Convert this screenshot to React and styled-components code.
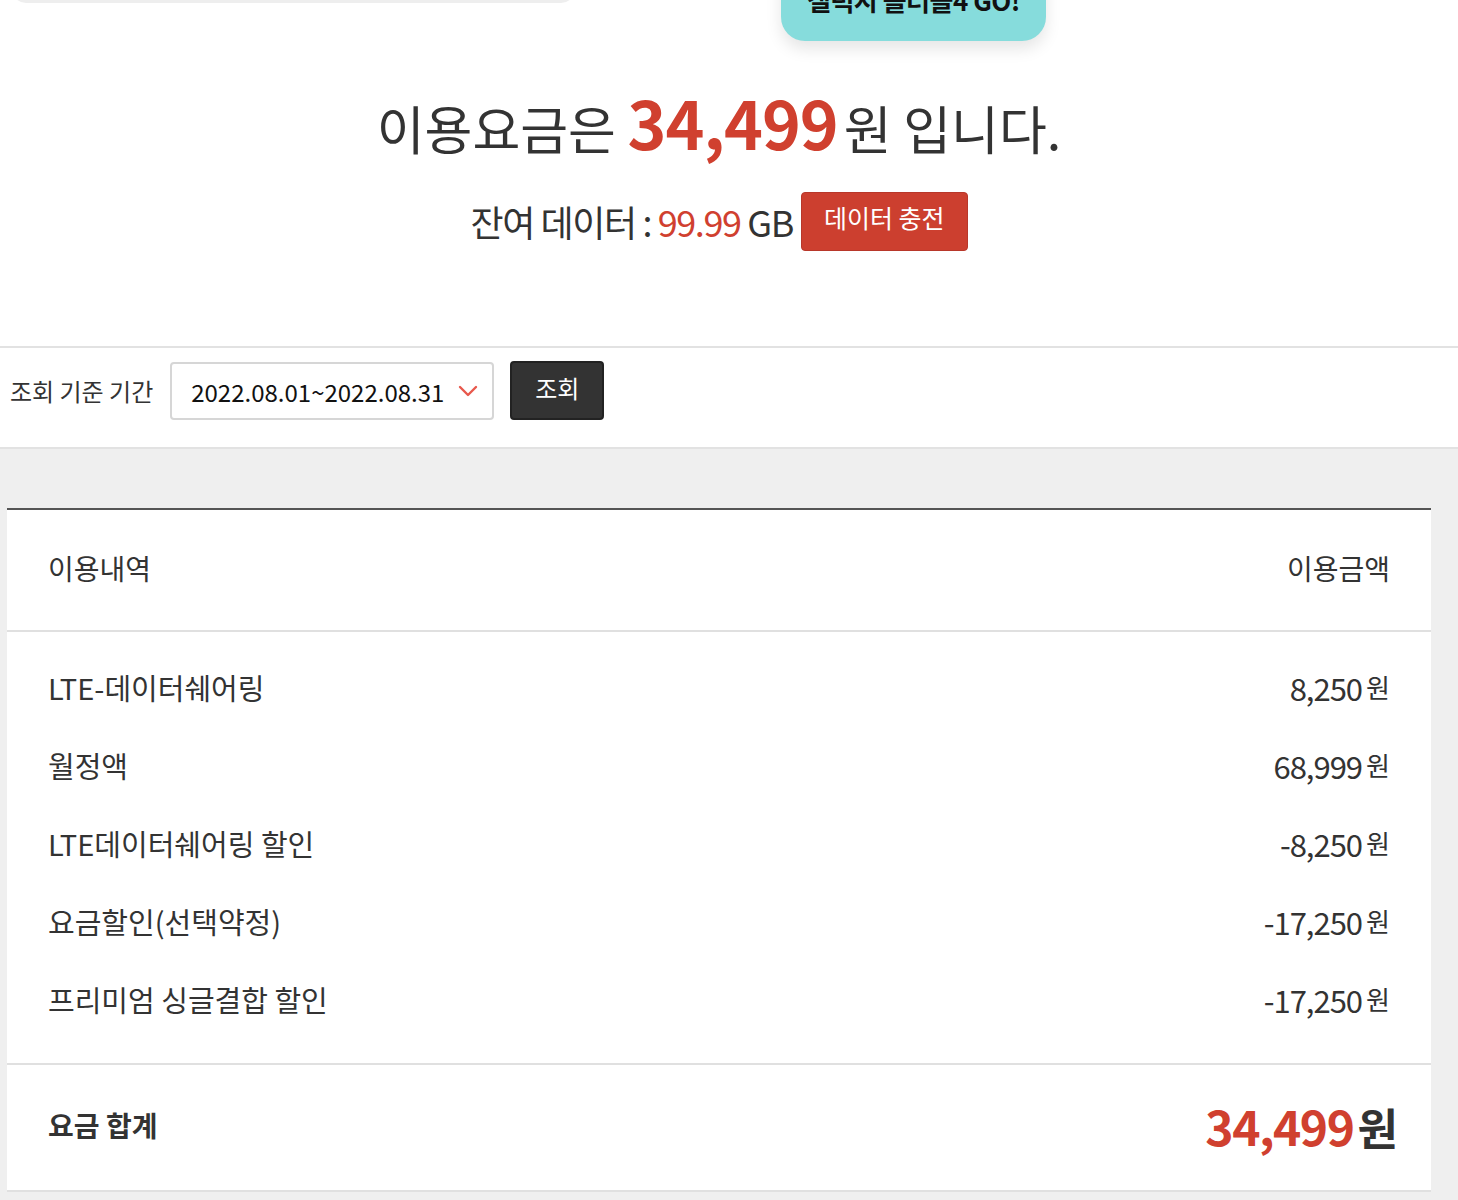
import React from 'react';
import styled, { createGlobalStyle } from 'styled-components';

const Global = createGlobalStyle`
  html, body { margin: 0; padding: 0; background: #fff; }
  body { font-family: "Noto Sans CJK KR", "Noto Sans", sans-serif; color: #333; }
  * { box-sizing: border-box; }
`;

const Page = styled.div`
  width: 1458px;
  overflow: hidden;
`;

const TopStrip = styled.div`
  height: 41px;
  display: flex;
  align-items: flex-start;
`;

const SearchStub = styled.div`
  margin-left: 12px;
  margin-top: -37px;
  width: 563px;
  height: 40px;
  background: #eeeeee;
  border-radius: 0 0 14px 14px;
`;

const PromoButton = styled.div`
  margin-left: 206px;
  margin-top: -39px;
  width: 265px;
  height: 80px;
  padding-top: 24px;
  background: #86dcdc;
  border-radius: 0 0 24px 24px;
  box-shadow: 0 8px 16px rgba(0, 0, 0, 0.1);
  text-align: center;
  font-size: 26px;
  line-height: 30px;
  font-weight: 700;
  color: #111;
  letter-spacing: -0.5px;
`;

const Hero = styled.section`
  padding: 42px 20px 0 0;
  display: flex;
  flex-direction: column;
  align-items: center;
`;

const Title = styled.h2`
  margin: 0;
  font-size: 52px;
  line-height: 76px;
  font-weight: 400;
  color: #333;
  white-space: nowrap;
`;

const BigNumber = styled.strong`
  font-size: 66px;
  font-weight: 700;
  color: #d0402f;
  letter-spacing: -1px;
  margin-right: 6px;
`;

const DataRow = styled.div`
  margin-top: 26px;
  display: flex;
  align-items: center;
  gap: 8px;
  font-size: 36px;
  line-height: 59px;
  letter-spacing: -1.4px;
  color: #333;
`;

const Red = styled.span`
  color: #d0402f;
`;

const ChargeButton = styled.button`
  height: 59px;
  padding: 0 22px 8px;
  border: 1px solid #b8372a;
  border-radius: 4px;
  background: #cc3f2f;
  color: #fff;
  font-family: inherit;
  font-size: 25px;
  letter-spacing: 0;
  line-height: 1;
`;

const Filter = styled.div`
  margin-top: 95px;
  border-top: 2px solid #e2e2e2;
  border-bottom: 2px solid #e2e2e2;
  display: flex;
  align-items: flex-start;
  padding: 14px 0 27px 10px;
`;

const FilterLabel = styled.span`
  font-size: 24px;
  line-height: 58px;
  color: #333;
  margin-right: 17px;
  white-space: nowrap;
`;

const SelectBox = styled.div`
  width: 324px;
  height: 58px;
  border: 2px solid #d6d6d6;
  border-radius: 4px;
  display: flex;
  align-items: center;
  justify-content: space-between;
  padding: 0 14px 0 19px;
  font-size: 24px;
  color: #111;
`;

const QueryButton = styled.button`
  margin-left: 16px;
  margin-top: -1px;
  width: 94px;
  height: 59px;
  border: 2px solid #222;
  border-radius: 4px;
  background: #333;
  color: #fff;
  font-family: inherit;
  font-size: 24px;
  padding-bottom: 8px;
`;

const GraySection = styled.section`
  background: #efefef;
  padding: 59px 27px 30px 7px;
`;

const Card = styled.div`
  background: #fff;
  border-top: 2px solid #555;
`;

const HeadRow = styled.div`
  height: 122px;
  border-bottom: 2px solid #e0e0e0;
  display: flex;
  align-items: center;
  justify-content: space-between;
  padding: 0 41px 5px;
  font-size: 28px;
  color: #333;
`;

const Items = styled.div`
  padding: 16px 41px 25px;
  border-bottom: 2px solid #e0e0e0;
`;

const ItemRow = styled.div`
  height: 78px;
  display: flex;
  align-items: center;
  justify-content: space-between;
  font-size: 29px;
  color: #333;
`;

const Amount = styled.span`
  display: flex;
  align-items: baseline;
  font-size: 31px;
  letter-spacing: -1px;
`;

const Won = styled.span`
  font-size: 26px;
  margin-left: 4px;
  position: relative;
  top: -3px;
  letter-spacing: 0;
`;

const TotalRow = styled.div`
  height: 127px;
  border-bottom: 2px solid #e0e0e0;
  display: flex;
  align-items: center;
  justify-content: space-between;
  padding: 0 33px 5px 41px;
`;

const TotalLabel = styled.strong`
  font-size: 28px;
  font-weight: 700;
  color: #333;
`;

const TotalAmount = styled.span`
  display: flex;
  align-items: baseline;
  font-weight: 700;
`;

const TotalNumber = styled.span`
  font-size: 48px;
  color: #d0402f;
  letter-spacing: -1.5px;
`;

const TotalWon = styled.span`
  font-size: 44px;
  color: #333;
  margin-left: 4px;
`;

const Chevron = () => (
  <svg width="20" height="12" viewBox="0 0 20 12" fill="none">
    <path d="M2 2 L10 10 L18 2" stroke="#e8584c" strokeWidth="2.4" strokeLinecap="round" strokeLinejoin="round" />
  </svg>
);

const items = [
  ['LTE-데이터쉐어링', '8,250'],
  ['월정액', '68,999'],
  ['LTE데이터쉐어링 할인', '-8,250'],
  ['요금할인(선택약정)', '-17,250'],
  ['프리미엄 싱글결합 할인', '-17,250'],
];

export default function App() {
  return (
    <Page>
      <Global />
      <TopStrip>
        <SearchStub />
        <PromoButton>갤럭시 폴더블4 GO!</PromoButton>
      </TopStrip>
      <Hero>
        <Title>
          이용요금은 <BigNumber>34,499</BigNumber>원 입니다.
        </Title>
        <DataRow>
          <span>
            잔여 데이터 : <Red>99.99</Red> GB
          </span>
          <ChargeButton>데이터 충전</ChargeButton>
        </DataRow>
      </Hero>
      <Filter>
        <FilterLabel>조회 기준 기간</FilterLabel>
        <SelectBox>
          <span>2022.08.01~2022.08.31</span>
          <Chevron />
        </SelectBox>
        <QueryButton>조회</QueryButton>
      </Filter>
      <GraySection>
        <Card>
          <HeadRow>
            <span>이용내역</span>
            <span>이용금액</span>
          </HeadRow>
          <Items>
            {items.map(([name, value]) => (
              <ItemRow key={name}>
                <span>{name}</span>
                <Amount>
                  {value}
                  <Won>원</Won>
                </Amount>
              </ItemRow>
            ))}
          </Items>
          <TotalRow>
            <TotalLabel>요금 합계</TotalLabel>
            <TotalAmount>
              <TotalNumber>34,499</TotalNumber>
              <TotalWon>원</TotalWon>
            </TotalAmount>
          </TotalRow>
        </Card>
      </GraySection>
    </Page>
  );
}
